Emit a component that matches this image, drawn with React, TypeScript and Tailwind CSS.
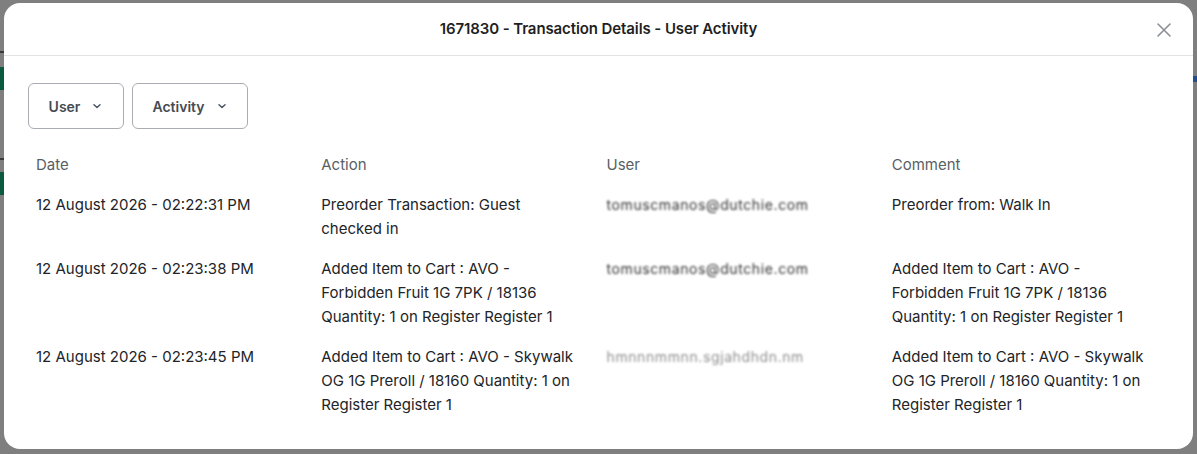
import React from 'react';

interface ActivityRow {
  date: string;
  action: string;
  user: string;
  faded?: boolean;
  comment: string;
}

const ROWS: ActivityRow[] = [
  {
    date: '12 August 2026 - 02:22:31 PM',
    action: 'Preorder Transaction: Guest checked in',
    user: 'tomuscmanos@dutchie.com',
    comment: 'Preorder from: Walk In',
  },
  {
    date: '12 August 2026 - 02:23:38 PM',
    action: 'Added Item to Cart : AVO - Forbidden Fruit 1G 7PK / 18136 Quantity: 1 on Register Register 1',
    user: 'tomuscmanos@dutchie.com',
    comment: 'Added Item to Cart : AVO - Forbidden Fruit 1G 7PK / 18136 Quantity: 1 on Register Register 1',
  },
  {
    date: '12 August 2026 - 02:23:45 PM',
    action: 'Added Item to Cart : AVO - Skywalk OG 1G Preroll / 18160 Quantity: 1 on Register Register 1',
    user: 'hmnnnmmnn.sgjahdhdn.nm',
    faded: true,
    comment: 'Added Item to Cart : AVO - Skywalk OG 1G Preroll / 18160 Quantity: 1 on Register Register 1',
  },
];

function Chevron() {
  return (
    <svg className="w-3 h-3 text-gray-600" viewBox="0 0 12 12" fill="none">
      <path d="M3 4.75 6 7.5l3-2.75" stroke="currentColor" strokeWidth="1.5" strokeLinecap="round" strokeLinejoin="round" />
    </svg>
  );
}

function FilterButton({ label, width }: { label: string; width: string }) {
  return (
    <button
      className={`h-[46px] ${width} border border-[#a9adb1] rounded-[6px] flex items-center justify-center gap-[11px] text-[14px] font-semibold text-[#464c52]`}
    >
      {label}
      <Chevron />
    </button>
  );
}

export default function App() {
  return (
    <div
      className="relative w-[1197px] h-[454px] bg-[#7f7f7f] overflow-hidden flex pl-[4px] pr-[4px] pt-[3px] pb-[5px]"
      style={{ fontFamily: 'Inter, "Noto Sans", sans-serif' }}
    >
      {/* Bits of the page behind the overlay */}
      <div className="absolute left-0 top-[51px] w-[4px] h-[2px] bg-[#3a3a3a]" />
      <div className="absolute left-0 top-[67px] w-[4px] h-[23px] bg-[#0b5a40]" />
      <div className="absolute left-0 top-[158px] w-[4px] h-[2px] bg-[#3a3a3a]" />
      <div className="absolute left-0 top-[172px] w-[4px] h-[23px] bg-[#0b5a40]" />
      <div className="absolute right-0 top-[76px] w-[4px] h-[6px] bg-[#1f4f8f]" />

      {/* Modal */}
      <div className="flex-1 bg-white rounded-[16px] flex flex-col">
        <div className="relative h-[53px] border-b border-[#e3e3e3] flex items-center justify-center">
          <h2 className="text-[15px] font-semibold text-[#1f1f1f] tracking-[-0.1px]">
            1671830 - Transaction Details - User Activity
          </h2>
          <button className="absolute right-[19px] top-[17px] p-0.5 text-[#8a9096]" aria-label="Close">
            <svg className="w-[16px] h-[16px]" viewBox="0 0 16 16" fill="none">
              <path d="M2 2l12 12M14 2 2 14" stroke="currentColor" strokeWidth="1.6" strokeLinecap="round" />
            </svg>
          </button>
        </div>

        <div className="px-6 pt-[27px]">
          <div className="flex gap-2">
            <FilterButton label="User" width="w-[96px]" />
            <FilterButton label="Activity" width="w-[116px]" />
          </div>

          <table className="w-full table-fixed mt-[16px] text-[15px] leading-6">
            <thead>
              <tr className="text-left text-[#5a5f64]">
                <th className="font-normal px-2 py-2">Date</th>
                <th className="font-normal px-2 py-2">Action</th>
                <th className="font-normal px-2 py-2">User</th>
                <th className="font-normal px-2 py-2">Comment</th>
              </tr>
            </thead>
            <tbody className="text-[#222428]">
              {ROWS.map((row) => (
                <tr key={row.date} className="align-top">
                  <td className="px-2 py-2">{row.date}</td>
                  <td className="px-2 py-2 pr-4">{row.action}</td>
                  <td className="px-2 py-2">
                    <span
                      className={`inline-block text-[14px] blur-[1.2px] tracking-[0.6px] ${
                        row.faded ? 'text-[#8f8f8f]' : 'text-[#333]'
                      }`}
                    >
                      {row.user}
                    </span>
                  </td>
                  <td className="px-2 py-2 pr-4">{row.comment}</td>
                </tr>
              ))}
            </tbody>
          </table>
        </div>
      </div>
    </div>
  );
}
